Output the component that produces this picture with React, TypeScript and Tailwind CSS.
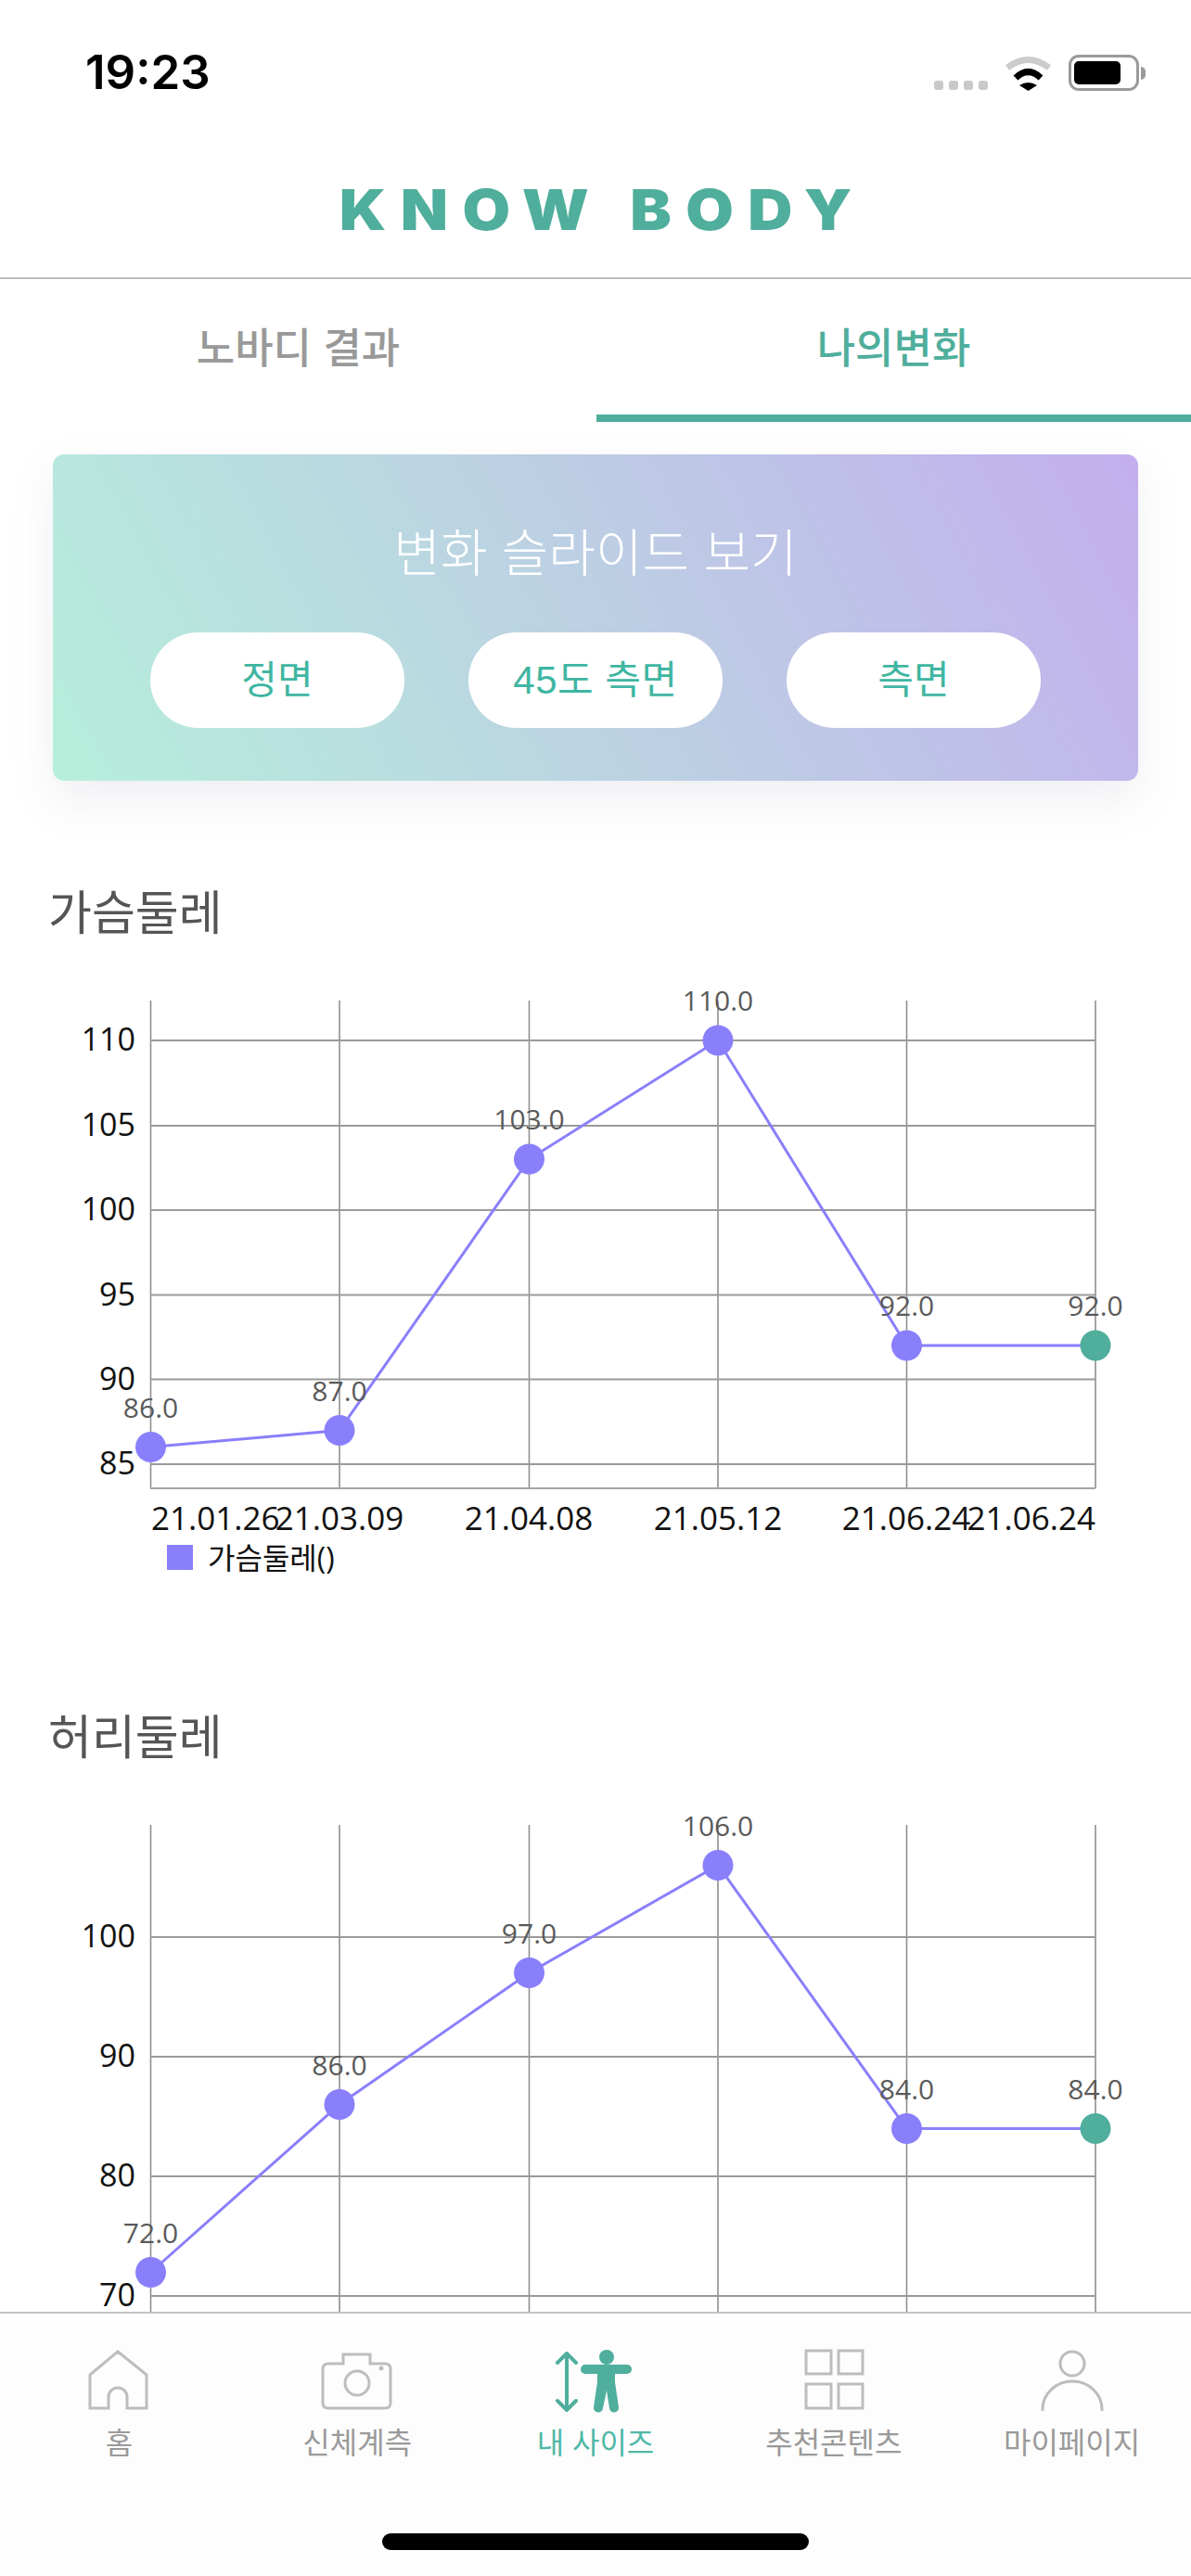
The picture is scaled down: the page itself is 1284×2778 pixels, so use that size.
const BLUE = "#8a7ffb";
const TEAM = "#4fae9c";
const XS = [162.5, 366, 570.5, 774, 977.5, 1181];

type ChartProps = {
  top: number;
  height: number;
  axisTop: number;
  axisBottom: number;
  ticks: { label: string; y: number }[];
  points: { label: string; y: number }[];
  dates?: boolean;
};

function Chart({ top, height, axisTop, axisBottom, ticks, points, dates }: ChartProps) {
  const line = points.map((p, i) => `${XS[i]},${p.y}`).join(" ");
  return (
    <svg className="block w-[1284px] shrink-0 overflow-visible font-['Open_Sans','Noto_Sans_CJK_KR',sans-serif]" height={height} viewBox={`0 ${top} 1284 ${height}`}>
      {XS.map((x) => (
        <line key={x} x1={x} x2={x} y1={axisTop} y2={axisBottom} stroke="#8f8f8f" strokeWidth="1.6" />
      ))}
      {ticks.map((t) => (
        <g key={t.label}>
          <line x1={162} x2={1181} y1={t.y} y2={t.y} stroke="#9a9a9a" strokeWidth="1.8" />
          <text x={146} y={t.y + 11} textAnchor="end" fontSize="34" fill="#111">
            {t.label}
          </text>
        </g>
      ))}
      {dates && <line x1={162} x2={1181} y1={axisBottom} y2={axisBottom} stroke="#a5a5a5" strokeWidth="2" />}
      <polyline points={line} fill="none" stroke={BLUE} strokeWidth="3" />
      {points.map((p, i) => (
        <g key={i}>
          <circle cx={XS[i]} cy={p.y} r="16.5" fill={i === 5 ? TEAM : BLUE} />
          <text x={XS[i]} y={p.y - 32} textAnchor="middle" fontSize="30" fill="#5a5a5a">
            {p.label}
          </text>
        </g>
      ))}
      {dates && (
        <g fontSize="35" fill="#111">
          <text x={163} y={1650}>21.01.26</text>
          <text x={366} y={1650} textAnchor="middle">21.03.09</text>
          <text x={570} y={1650} textAnchor="middle">21.04.08</text>
          <text x={774} y={1650} textAnchor="middle">21.05.12</text>
          <text x={977} y={1650} textAnchor="middle">21.06.24</text>
          <text x={1181} y={1650} textAnchor="end">21.06.24</text>
          <rect x={180} y={1666} width={28} height={27} fill={BLUE} />
          <text x={224} y={1692} fontSize="32">가슴둘레()</text>
        </g>
      )}
    </svg>
  );
}

function NavItem({ label, active, children }: { label: string; active?: boolean; children: React.ReactNode }) {
  return (
    <div className="flex flex-1 flex-col items-center">
      <svg className="h-[104px] w-[104px]" viewBox="0 0 104 104" fill="none" stroke="#bdbdbd" strokeWidth="3">
        {children}
      </svg>
      <span className={`text-[32px] leading-[48px] ${active ? "text-[#4fb8a6]" : "text-[#9a9a9a]"}`}>{label}</span>
    </div>
  );
}

export default function App() {
  return (
    <div className="flex h-[2778px] w-[1284px] flex-col overflow-hidden bg-white font-['Liberation_Sans','Noto_Sans_CJK_KR',sans-serif]">
      {/* Status bar + logo */}
      <header className="h-[301px] shrink-0 border-b-2 border-[#bdbdbd]">
        <div className="flex items-start justify-between pl-[92px] pr-[49px] pt-[52px]">
          <span className="font-['Inter',sans-serif] text-[51px] font-semibold leading-[52px] text-black">19:23</span>
          <div className="mt-[7px] flex items-end gap-[18px]">
            <div className="mb-[1px] flex gap-[6px]">
              <span className="h-[10px] w-[10px] rounded-[3px] bg-[#c9c9c9]" />
              <span className="h-[10px] w-[10px] rounded-[3px] bg-[#c9c9c9]" />
              <span className="h-[10px] w-[10px] rounded-[3px] bg-[#c9c9c9]" />
              <span className="h-[10px] w-[10px] rounded-[3px] bg-[#c9c9c9]" />
            </div>
            <svg width="51" height="39" viewBox="0 0 51 39" fill="none">
              <path d="M3 14Q25.5 -3 48 14" stroke="#cccccc" strokeWidth="7" />
              <path d="M12 25Q25.5 12 39 25" stroke="#000" strokeWidth="7" />
              <path d="M16 33Q25.5 27 35 33L25.5 39Z" fill="#000" />
            </svg>
            <div className="flex items-center">
              <div className="flex h-[39px] w-[76px] items-center rounded-[11px] border-[3px] border-[#9a9a9a] pl-[3px]">
                <div className="h-[25px] w-[50px] rounded-[5px] bg-black" />
              </div>
              <div className="ml-[2px] h-[14px] w-[5px] rounded-r-full bg-[#9a9a9a]" />
            </div>
          </div>
        </div>
        <div className="mt-[87px] scale-x-[1.11] pl-[14px] text-center font-['Inter',sans-serif] text-[60px] font-black leading-[70px] tracking-[14px] text-[#4fae9c]">
          KNOW BODY
        </div>
      </header>

      {/* Tabs */}
      <nav className="flex h-[154px] shrink-0">
        <div className="flex h-full w-[643px] items-center justify-center pb-[2px] text-[45px] font-medium text-[#999999]">
          노바디 결과
        </div>
        <div className="flex h-full flex-1 items-center justify-center border-b-[8px] border-[#4fae9c] pt-[6px] text-[45px] font-medium text-[#4fae9c]">
          나의변화
        </div>
      </nav>

      <main className="min-h-0 flex-1">
        {/* Slide card */}
        <section className="mx-[57px] mt-[35px] flex h-[352px] flex-col items-center rounded-[12px] bg-[linear-gradient(62deg,#b6efdb,#bcd0e3_50%,#c3aeee)] shadow-[0_20px_50px_rgba(90,100,130,0.10)]">
          <h2 className="mt-[74px] text-[55px] font-light leading-[66px] text-white">변화 슬라이드 보기</h2>
          <div className="mt-[52px] flex gap-[69px]">
            <button className="h-[103px] w-[274px] rounded-[52px] bg-white text-[42px] text-[#3fb6a2]">정면</button>
            <button className="h-[103px] w-[274px] rounded-[52px] bg-white text-[42px] tracking-[0.5px] text-[#3fb6a2]">45도 측면</button>
            <button className="h-[103px] w-[274px] rounded-[52px] bg-white text-[42px] text-[#3fb6a2]">측면</button>
          </div>
        </section>

        <h3 className="ml-[52px] mt-[111px] text-[51px] font-normal leading-[65px] text-[#555555]">가슴둘레</h3>
        <Chart
          top={1018}
          height={702}
          axisTop={1079}
          axisBottom={1605}
          ticks={[
            { label: "110", y: 1122 },
            { label: "105", y: 1214 },
            { label: "100", y: 1305 },
            { label: "95", y: 1396.5 },
            { label: "90", y: 1487.5 },
            { label: "85", y: 1579 },
          ]}
          points={[
            { label: "86.0", y: 1560.5 },
            { label: "87.0", y: 1542.5 },
            { label: "103.0", y: 1250 },
            { label: "110.0", y: 1122 },
            { label: "92.0", y: 1451 },
            { label: "92.0", y: 1451 },
          ]}
          dates
        />

        <h3 className="ml-[52px] mt-[122px] text-[51px] font-normal leading-[65px] text-[#555555]">허리둘레</h3>
        <Chart
          top={1907}
          height={586}
          axisTop={1968}
          axisBottom={2493}
          ticks={[
            { label: "100", y: 2089 },
            { label: "90", y: 2218 },
            { label: "80", y: 2347 },
            { label: "70", y: 2476 },
          ]}
          points={[
            { label: "72.0", y: 2450.5 },
            { label: "86.0", y: 2269.5 },
            { label: "97.0", y: 2127.5 },
            { label: "106.0", y: 2011.5 },
            { label: "84.0", y: 2295.5 },
            { label: "84.0", y: 2295.5 },
          ]}
        />
      </main>

      {/* Bottom tab bar */}
      <footer className="relative flex h-[285px] shrink-0 flex-col border-t-2 border-[#c4c4c4] bg-[#fdfdfd] pt-[12px]">
        <div className="flex">
          <NavItem label="홈">
            <path d="M21 90V54L51 29L82 54V90H61V78A10 10 0 0 0 41 78V90Z" />
          </NavItem>
          <NavItem label="신체계측">
            <path d="M15 48Q15 42 21 42H37V32H66V42H82Q88 42 88 48V84Q88 90 82 90H21Q15 90 15 84Z" />
            <circle cx="52" cy="63" r="13" />
            <circle cx="78" cy="47" r="2.5" fill="#bdbdbd" stroke="none" />
          </NavItem>
          <NavItem label="내 사이즈" active>
            <g stroke={TEAM} strokeLinecap="round" strokeLinejoin="round" strokeWidth="4">
              <path d="M21 31V92M11 41L21 31L31 41M11 82L21 92L31 82" />
              <path d="M41 48H86" strokeWidth="10" />
            </g>
            <circle cx="64" cy="35" r="8" fill={TEAM} stroke="none" />
            <path d="M54 48H73V62L77 89A5 5 0 0 1 67 90L64 71L60 90A5 5 0 0 1 50 89L54 62Z" fill={TEAM} stroke="none" />
          </NavItem>
          <NavItem label="추천콘텐츠">
            <rect x="22" y="28" width="27" height="25" />
            <rect x="57" y="28" width="26" height="25" />
            <rect x="22" y="64" width="27" height="26" />
            <rect x="57" y="64" width="26" height="26" />
          </NavItem>
          <NavItem label="마이페이지">
            <circle cx="52" cy="42" r="13" />
            <path d="M20 93V91A32 30 0 0 1 84 91V93" />
          </NavItem>
        </div>
        <div className="mx-auto mt-[73px] h-[18px] w-[460px] rounded-full bg-black" />
      </footer>
    </div>
  );
}
